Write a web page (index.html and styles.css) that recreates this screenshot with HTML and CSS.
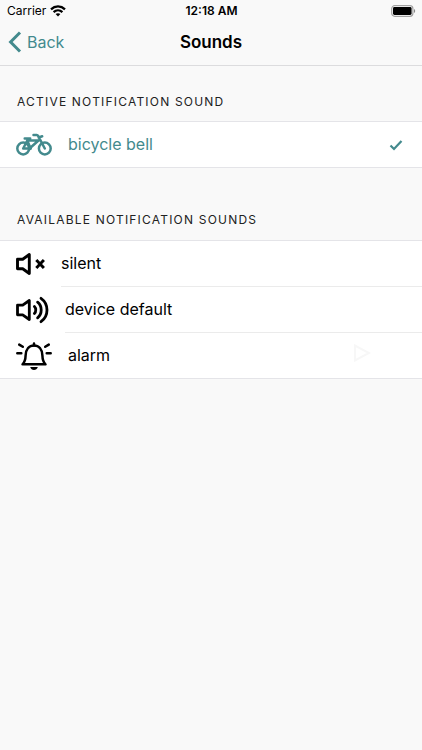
FILE: index.html
```html
<!DOCTYPE html>
<html lang="en">
<head>
<meta charset="utf-8">
<meta name="viewport" content="width=device-width, initial-scale=1">
<title>Sounds</title>
<link rel="stylesheet" href="styles.css">
</head>
<body>
<header class="top">
  <div class="status">
    <div class="carrier">
      <span>Carrier</span>
      <svg width="16" height="12" viewBox="0 0 16 12" aria-hidden="true">
        <g fill="none" stroke="#000" stroke-width="2.3">
          <path d="M1 4.3C5 .5 11 .5 15 4.3"/>
          <path d="M3.6 7.1c2.5-2.3 6.3-2.3 8.8 0"/>
        </g>
        <path d="M5.6 9.1c1.4-1.2 3.4-1.2 4.8 0L8 11.6z"/>
      </svg>
    </div>
    <time class="clock">12:18 AM</time>
    <svg class="battery" width="25" height="12" viewBox="0 0 25 12" aria-hidden="true">
      <rect x=".7" y=".7" width="21.2" height="10.6" rx="3" fill="#fff" stroke="#a2a2a2" stroke-width="1.2"/>
      <rect x="2" y="2" width="18.6" height="8" rx="1.4"/>
      <path d="M23 4c1.6.5 1.6 3.5 0 4z" fill="#888"/>
    </svg>
  </div>
  <nav class="nav">
    <a class="back" href="#">
      <svg width="14" height="22" viewBox="0 0 14 22" aria-hidden="true"><path d="M12 1.5 2.6 11l9.4 9.5" fill="none" stroke="currentColor" stroke-width="3"/></svg>
      <span>Back</span>
    </a>
    <h1 class="title">Sounds</h1>
  </nav>
</header>
<main>
  <section>
    <h2 class="heading">Active notification sound</h2>
    <ul class="list">
      <li class="row active">
        <svg width="36" height="28" viewBox="0 0 36 28" aria-hidden="true">
          <g fill="none" stroke="currentColor" stroke-width="2.5" stroke-linecap="round" stroke-linejoin="round">
            <circle cx="7.2" cy="17.5" r="5.9"/>
            <circle cx="28.8" cy="17.5" r="5.9"/>
            <path d="M7.2 17.5h6.3L22.5 9.5H11.3L7.2 17.5M11.3 9.5l3 7.5M8.7 7.4h5.5M17.5 4h3.2c.7 0 1.1.3 1.4.9l6.7 12.6M22.7 6.5l3.5-1.2"/>
          </g>
          <circle cx="14" cy="17.3" r="2" fill="currentColor"/>
        </svg>
        <span class="label">bicycle bell</span>
        <svg class="check" width="14" height="12" viewBox="0 0 14 12" role="img" aria-label="Selected"><path d="M1.5 6.5 5 10l7.5-8" fill="none" stroke="currentColor" stroke-width="2.2"/></svg>
      </li>
    </ul>
  </section>
  <section>
    <h2 class="heading wide">Available notification sounds</h2>
    <ul class="list">
      <li class="row">
        <svg width="29" height="28" viewBox="0 0 29 28" aria-hidden="true">
          <g fill="none" stroke="#000" stroke-width="2.9" stroke-linejoin="round">
            <path d="M1.5 9.2h5.2L13.3 4.5v19L6.7 18.8H1.5z"/>
            <path d="m20.3 10 7.6 8m0-8-7.6 8"/>
          </g>
        </svg>
        <span class="label">silent</span>
      </li>
      <li class="row">
        <svg width="33" height="28" viewBox="0 0 33 28" aria-hidden="true">
          <g fill="none" stroke="#000" stroke-width="2.8" stroke-linecap="round" stroke-linejoin="round">
            <path d="M1.5 9.2h5.2L13.3 4.5v19L6.7 18.8H1.5z"/>
            <path d="M18.4 10.4c1.8 1.8 1.8 5.4 0 7.2M21.6 6.2c4.8 3.8 4.8 11.8 0 15.6M25 2.3c8 5.7 8 17.7 0 23.4"/>
          </g>
        </svg>
        <span class="label">device default</span>
      </li>
      <li class="row">
        <svg width="36" height="28" viewBox="0 0 36 28" aria-hidden="true">
          <g fill="none" stroke="#000" stroke-width="2.5" stroke-linecap="round" stroke-linejoin="round">
            <path d="M6.5 22.3c2.4-2.3 3-4.2 3.1-8.8C9.8 7.1 13.2 3.4 18 3.4s8.2 3.7 8.4 10.1c.1 4.6.7 6.5 3.1 8.8z"/>
            <path d="M18 1.4v2M1.3 11.2h4M30.7 11.2h4M3.2 2.6l3.6 2.2M32.8 2.6l-3.6 2.2"/>
          </g>
          <path d="M14.2 25h7.6c-.5 2-2 3-3.8 3s-3.3-1-3.8-3z"/>
        </svg>
        <span class="label">alarm</span>
        <button class="play" type="button" aria-label="Play alarm">
          <svg width="18" height="18" viewBox="0 0 18 18" aria-hidden="true"><path d="M2 1.5v15L16 9z" fill="none" stroke="#f7f7f7" stroke-width="2"/></svg>
        </button>
      </li>
    </ul>
  </section>
</main>
</body>
</html>
```
FILE: styles.css
```css
* { box-sizing: border-box; }

body {
  margin: 0;
  background: #f9f9f9;
  color: #000;
  font-family: Inter, "Liberation Sans", sans-serif;
  font-size: 16px;
}

h1, h2, ul { margin: 0; padding: 0; }

svg { display: block; flex: none; }

.top { border-bottom: 1px solid #dcdcde; }

.status {
  display: grid;
  grid-template-columns: 1fr auto 1fr;
  align-items: center;
  height: 21px;
  padding: 0 6px 0 7px;
  font-size: 12px;
}

.carrier { display: flex; align-items: center; gap: 4px; }
.clock { font-weight: 600; }
.battery { justify-self: end; }

.nav {
  display: grid;
  grid-template-columns: 1fr auto 1fr;
  align-items: center;
  height: 44px;
  padding: 0 8px 2px;
}

.back {
  display: flex;
  align-items: center;
  justify-self: start;
  gap: 5px;
  color: #438a8d;
  text-decoration: none;
}

.title { font-size: 17px; font-weight: 600; }

.heading {
  padding: 28px 17px 12px;
  font-size: 12px;
  font-weight: 400;
  line-height: 15px;
  letter-spacing: 0.1em;
  text-transform: uppercase;
  color: #222;
}

.wide { padding-top: 44px; padding-bottom: 13px; }

.list {
  list-style: none;
  background: #fff;
  border-top: 1px solid #e4e4e8;
  border-bottom: 1px solid #e4e4e8;
}

.row {
  display: flex;
  align-items: center;
  gap: 16px;
  height: 46px;
  padding-left: 16px;
}

.row:last-child { height: 45px; }

.active { color: #438a8d; }

.label {
  flex: 1;
  line-height: 45px;
  border-bottom: 1px solid #ebebeb;
}

.row:last-child .label { border-bottom-color: transparent; }

.check { margin-right: 19px; }

.play {
  margin-right: 51px;
  padding: 0 0 6px;
  border: 0;
  background: none;
}
```
